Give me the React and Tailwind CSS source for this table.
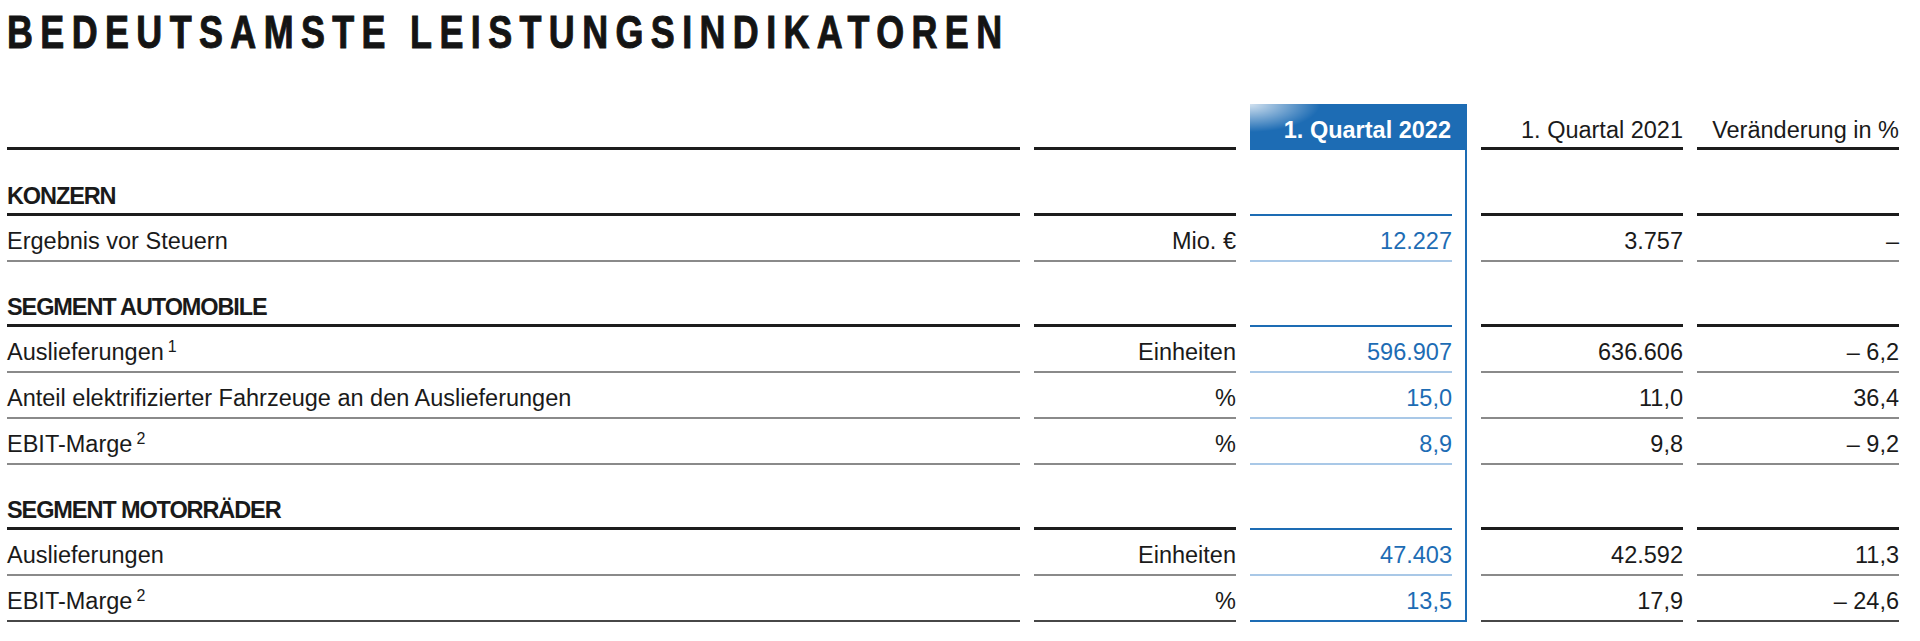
import React from "react";

const rows = [
  { type: "section", h: "h-[66px]", label: "KONZERN" },
  { type: "data", label: "Ergebnis vor Steuern", unit: "Mio. €", v1: "12.227", v2: "3.757", v3: "–" },
  { type: "section", h: "h-[65px]", label: "SEGMENT AUTOMOBILE" },
  { type: "data", label: "Auslieferungen", sup: "1", unit: "Einheiten", v1: "596.907", v2: "636.606", v3: "– 6,2" },
  { type: "data", label: "Anteil elektrifizierter Fahrzeuge an den Auslieferungen", unit: "%", v1: "15,0", v2: "11,0", v3: "36,4" },
  { type: "data", label: "EBIT-Marge", sup: "2", unit: "%", v1: "8,9", v2: "9,8", v3: "– 9,2" },
  { type: "section", h: "h-[65px]", label: "SEGMENT MOTORRÄDER" },
  { type: "data", label: "Auslieferungen", unit: "Einheiten", v1: "47.403", v2: "42.592", v3: "11,3" },
  { type: "data", label: "EBIT-Marge", sup: "2", unit: "%", v1: "13,5", v2: "17,9", v3: "– 24,6", last: true },
];

const GRID = "grid grid-cols-[1013px_202px_217px_202px_202px] gap-x-[14px]";

function Row({ r }) {
  const section = r.type === "section";
  const h = section ? r.h : "h-[46px]";
  const line = section
    ? "border-b-[3px] border-[#1c1c1c] pb-[3px]"
    : r.last
    ? "border-b-2 border-[#474747] pb-[5px]"
    : "border-b-2 border-[#8a8a8a] pb-[5px]";
  const blueLine = section
    ? "border-b-2 border-[#1d6cb4] pb-[4px]"
    : r.last
    ? "pb-[5px]"
    : "border-b-2 border-[#a9c8e7] pb-[5px]";
  return (
    <div className={`${GRID} ${h}`}>
      <div className={`flex items-end ${line}`}>
        {section ? (
          <span className="font-bold tracking-[-1.1px]">{r.label}</span>
        ) : (
          <span>
            {r.label}
            {r.sup && <sup className="ml-[4px] text-[16px]">{r.sup}</sup>}
          </span>
        )}
      </div>
      <div className={`flex items-end justify-end ${line}`}>{r.unit}</div>
      <div
        className={`flex border-r-2 border-[#1d6cb4] pr-[13px] ${
          r.last ? "border-b-2" : ""
        }`}
      >
        <div className={`flex w-full items-end justify-end text-[#1d6cb4] ${blueLine}`}>{r.v1}</div>
      </div>
      <div className={`flex items-end justify-end ${line}`}>{r.v2}</div>
      <div className={`flex items-end justify-end ${line}`}>{r.v3}</div>
    </div>
  );
}

export default function App() {
  return (
    <div className="min-h-[641px] w-[1920px] bg-white font-['Liberation_Sans',Arial,sans-serif] text-[#1a1a1a]">
      <div className="pl-[7px] pt-[9px]">
        <h1 className="inline-block origin-left scale-x-[0.78] whitespace-nowrap text-[46px] font-bold leading-none tracking-[9.5px] text-[#141414] [-webkit-text-stroke:1px_#141414]">
          <span>BEDEUTSAMSTE</span>
          <span className="ml-[22px]">LEISTUNGSINDIKATOREN</span>
        </h1>
        <div className="mt-[49px] text-[23.5px] leading-[28px]">
          <div className={`${GRID} h-[46px]`}>
            <div className="border-b-[3px] border-[#1c1c1c]" />
            <div className="border-b-[3px] border-[#1c1c1c]" />
            <div className="flex items-end justify-end bg-[#1d6cb4] bg-[radial-gradient(ellipse_70px_28px_at_0_0,rgba(255,255,255,0.8),rgba(255,255,255,0))] pb-[6px] pr-[16px] font-bold text-white">
              1. Quartal 2022
            </div>
            <div className="flex items-end justify-end border-b-[3px] border-[#1c1c1c] pb-[3px]">1. Quartal 2021</div>
            <div className="flex items-end justify-end border-b-[3px] border-[#1c1c1c] pb-[3px]">Veränderung in %</div>
          </div>
          {rows.map((r, i) => (
            <Row key={i} r={r} />
          ))}
        </div>
      </div>
    </div>
  );
}
